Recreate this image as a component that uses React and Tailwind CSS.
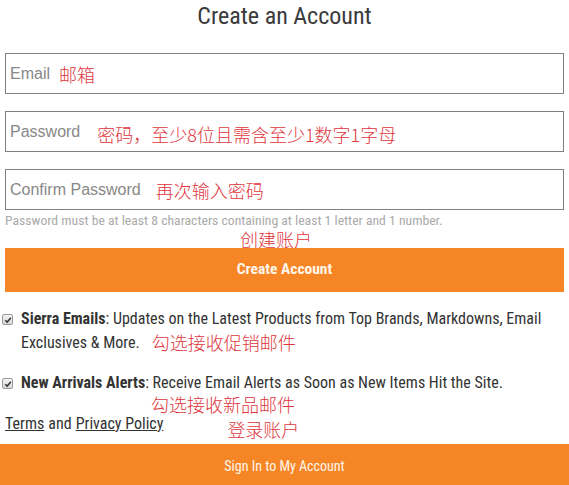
import React from "react";

const cond = { fontFamily: '"Roboto Condensed", "Liberation Sans Narrow", Roboto, sans-serif' };
const cjk = { fontFamily: '"Noto Sans CJK SC", sans-serif' };

function Note({ children, className = "" }) {
    return (
        <span className={`text-[#e0353d] text-[18px] leading-none font-light ${className}`} style={cjk}>
            {children}
        </span>
    );
}

function Field({ placeholder, note, noteClass = "" }) {
    return (
        <div className="h-[41px] border border-[#808080] flex items-center pl-[4px]">
            <span className="text-[16px] text-[#888]" style={{ fontFamily: '"Liberation Sans", Arial, sans-serif' }}>
                {placeholder}
            </span>
            <Note className={noteClass}>{note}</Note>
        </div>
    );
}

function Check() {
    return (
        <span className="absolute left-[2px] top-[7px] w-[11px] h-[11px] rounded-[2px] border border-[#9a9a9a] bg-gradient-to-b from-[#f4f4f4] to-[#d8d8d8] flex items-center justify-center">
            <svg viewBox="0 0 10 10" className="w-[8px] h-[8px]">
                <path d="M1.5 5.2 L4 7.6 L8.6 2.2" fill="none" stroke="#333" strokeWidth="1.8" />
            </svg>
        </span>
    );
}

export default function App() {
    return (
        <div className="w-[569px] h-[485px] overflow-hidden bg-white text-[#333]" style={cond}>
            <div className="px-[5px]">
                <h1 className="text-center text-[24px] leading-[32px] text-[#3a3a3a]">Create an Account</h1>

                <div className="mt-[21px] flex flex-col gap-[17px]">
                    <Field placeholder="Email" note="邮箱" noteClass="ml-[9px]" />
                    <Field placeholder="Password" note="密码，至少8位且需含至少1数字1字母" noteClass="ml-[17px] mt-[5px]" />
                    <Field placeholder="Confirm Password" note="再次输入密码" noteClass="ml-[15px]" />
                </div>

                <p className="text-[13.7px] leading-[18px] text-[#aaa] mt-[1px] whitespace-nowrap">
                    Password must be at least 8 characters containing at least 1 letter and 1 number.
                </p>
                <div className="h-[19px] flex items-center pl-[235px]">
                    <Note>创建账户</Note>
                </div>

                <button className="w-full h-[44px] bg-[#f68526] text-[#fff6ea] text-[15.5px] font-bold">
                    Create Account
                </button>
            </div>

            <div className="mt-[15px] text-[16px] leading-[24px] text-[#333]">
                <div className="relative pl-[21px] pr-[20px]">
                    <Check />
                    <b>Sierra Emails</b>: Updates on the Latest Products from Top Brands, Markdowns, Email Exclusives &amp; More.
                    <Note className="ml-[12px] align-[-2px]">勾选接收促销邮件</Note>
                </div>
                <div className="relative pl-[21px] mt-[16px]">
                    <Check />
                    <b>New Arrivals Alerts</b>: Receive Email Alerts as Soon as New Items Hit the Site.
                </div>
                <div className="h-[20px] flex items-center pl-[151px] -mt-[1px]">
                    <Note>勾选接收新品邮件</Note>
                </div>
                <div className="h-[20px] flex items-center pl-[5px]">
                    <a className="underline">Terms</a>
                    <span className="mx-[4px]">and</span>
                    <a className="underline">Privacy Policy</a>
                    <Note className="ml-[64px] mt-[9px]">登录账户</Note>
                </div>
            </div>

            <button className="mt-[10px] w-full h-[44px] bg-[#f68526] text-[#fff6ea] text-[14px]">
                Sign In to My Account
            </button>
        </div>
    );
}
